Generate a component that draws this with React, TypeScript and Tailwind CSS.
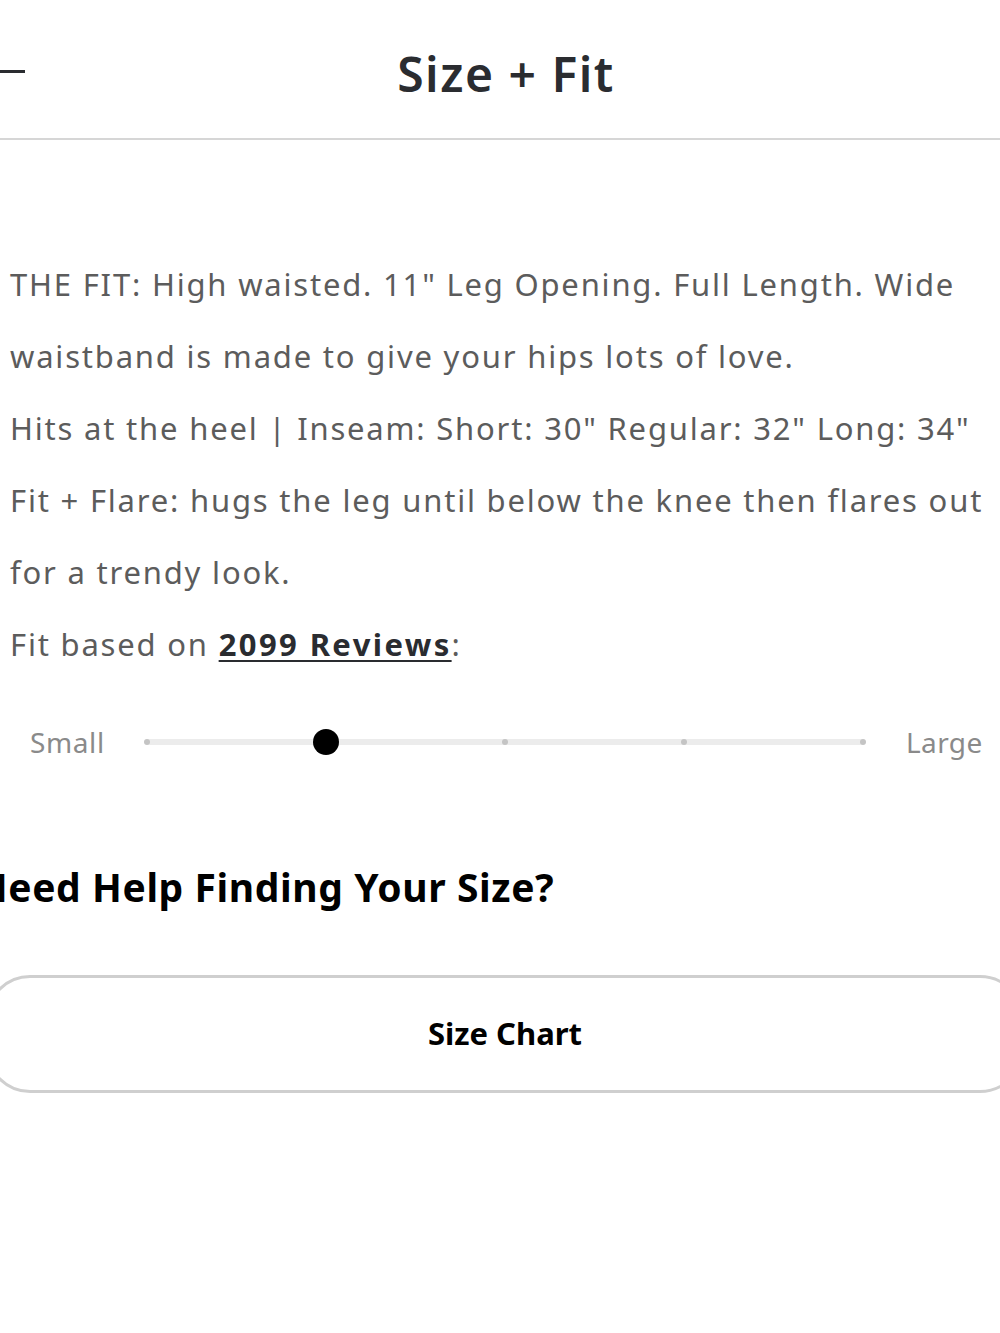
export default function App() {
  const stops = [0, 1, 2, 3, 4];
  const picked = 1;

  return (
    <div
      className="relative h-[1333px] w-[1000px] overflow-hidden bg-white"
      style={{ fontFamily: "'Noto Sans', Lato, sans-serif" }}
    >
      {/* header */}
      <div className="relative flex h-[140px] items-center justify-center border-b-2 border-[#d6d6d6]">
        <span className="absolute left-[-10px] top-[70px] h-[3px] w-[35px] bg-[#2a2c30]" />
        <h1 className="ml-[12px] mt-[10px] text-[48px] font-semibold tracking-[1.5px] text-[#2a2c30]">Size + Fit</h1>
      </div>

      {/* description */}
      <div className="pt-[108px] pl-[10px] pr-[10px] text-[31px] leading-[72px] tracking-[1.8px] text-[#5c5c5c]">
        <p>THE FIT: High waisted. 11" Leg Opening. Full Length. Wide waistband is made to give your hips lots of love.</p>
        <p>Hits at the heel | Inseam: Short: 30" Regular: 32" Long: 34"</p>
        <p>Fit + Flare: hugs the leg until below the knee then flares out for a trendy look.</p>
        <p>
          Fit based on{" "}
          <span className="font-bold tracking-[2.4px] text-[#2a2c30] underline decoration-2 underline-offset-4">2099 Reviews</span>:
        </p>
      </div>

      {/* fit slider */}
      <div className="mt-[41px] flex items-center pl-[30px]">
        <span className="w-[117px] text-[28px] tracking-[0.6px] text-[#8a8a8a]">Small</span>
        <div className="relative h-[26px] w-[716px]">
          <div className="absolute left-0 right-0 top-[10px] h-[6px] rounded-full bg-[#ececec]" />
          {stops.map(i => (
            <span
              key={i}
              className={
                i === picked
                  ? "absolute top-0 h-[26px] w-[26px] -translate-x-1/2 rounded-full bg-black"
                  : "absolute top-[10px] h-[6px] w-[6px] -translate-x-1/2 rounded-full bg-[#c4c4c4]"
              }
              style={{ left: `${i * 25}%` }}
            />
          ))}
        </div>
        <span className="ml-[43px] text-[28px] tracking-[0.4px] text-[#8a8a8a]">Large</span>
      </div>

      {/* help */}
      <h2 className="ml-[-24px] mt-[95px] text-[39px] font-bold tracking-[0.6px] text-black">Need Help Finding Your Size?</h2>

      <div className="ml-[-14px] mr-[-24px] mt-[58px]">
        <button className="flex h-[118px] w-full items-center justify-center rounded-[44px] border-[3px] border-[#cfcfcf] bg-white text-[31px] font-bold text-black">
          Size Chart
        </button>
      </div>
    </div>
  );
}
